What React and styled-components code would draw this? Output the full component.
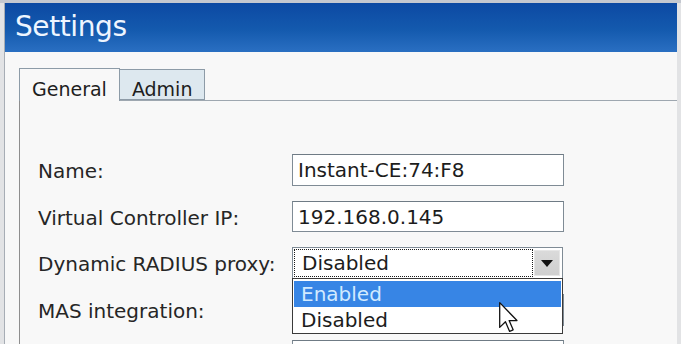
import React from "react";
import styled, { createGlobalStyle } from "styled-components";

const Global = createGlobalStyle`
  html, body { margin: 0; padding: 0; }
  body {
    background: #dedfe2;
    font-family: "DejaVu Sans", Verdana, sans-serif;
    overflow: hidden;
  }
`;

const Desktop = styled.div`
  width: 681px;
  height: 344px;
  box-sizing: border-box;
  padding: 3px 4px 0 4px;
  display: flex;
  overflow: hidden;
  background: linear-gradient(#c4c8d0, #c4c8d0) top / 100% 3px no-repeat, #e2e3e5;
`;

const Window = styled.div`
  flex: 1;
  display: flex;
  flex-direction: column;
  border-left: 1px solid #a7adb5;
  background: #f8f8f8;
  overflow: hidden;
  min-height: 0;
`;

const TitleBar = styled.div`
  flex-shrink: 0;
  height: 49px;
  display: flex;
  align-items: center;
  padding: 0 0 2px 10px;
  box-sizing: border-box;
  background: linear-gradient(#0c49a3 0%, #145aae 55%, #2a6fc2 100%);
  color: #eef5ff;
  font-size: 28px;
  letter-spacing: -0.4px;
`;

const Body = styled.div`
  flex: 1 0 auto;
  padding: 16px 0 0 14px;
  display: flex;
  flex-direction: column;
  background: #f8f8f8;
`;

const TabStrip = styled.div`
  flex-shrink: 0;
  display: flex;
  align-items: flex-end;
  border-bottom: 1px solid #9ea7b0;
  height: 32px;
`;

const Tab = styled.div`
  box-sizing: border-box;
  height: ${(p) => (p.$active ? "33px" : "31px")};
  margin-bottom: ${(p) => (p.$active ? "-1px" : "0")};
  padding: ${(p) => (p.$active ? "9px" : "8px")} 12px 0 12px;
  font-size: 19px;
  color: #1e1e1e;
  border: 1px solid #8d9ba7;
  border-bottom: ${(p) => (p.$active ? "none" : "1px solid #8d9ba7")};
  border-left: ${(p) => (p.$first ? "1px solid #8d9ba7" : "none")};
  background: ${(p) => (p.$active ? "#f8f8f8" : "#dde8ef")};
`;

const Panel = styled.div`
  flex: 1 0 auto;
  border-left: 1px solid #8e8e8e;
  padding: 53px 0 0 18px;
`;

const FormGrid = styled.div`
  display: grid;
  grid-template-columns: 254px 272px;
  grid-auto-rows: 32px;
  row-gap: 14.5px;
  align-items: center;
`;

const Label = styled.div`
  font-size: 20px;
  color: #262626;
  white-space: nowrap;
  padding-top: 2px;
`;

const TextBox = styled.div`
  box-sizing: border-box;
  height: ${(p) => p.$h || 32}px;
  align-self: start;
  border: 1px solid #7f8b95;
  border-top-color: #6f7b85;
  background: #ffffff;
  font-size: 20px;
  color: #1c1c1c;
  padding: 3px 0 0 5px;
  white-space: nowrap;
`;

const SelectWrap = styled.div`
  position: relative;
  height: 32px;
  align-self: start;
`;

const SelectBox = styled.div`
  box-sizing: border-box;
  height: 32px;
  width: 271px;
  border: 1px solid #7f8b95;
  background: #ffffff;
  display: flex;
  align-items: stretch;
  padding: 1px 2px 1px 1px;
  gap: 1px;
`;

const FocusText = styled.div`
  flex: 1;
  border: 1px dotted #1a1a1a;
  font-size: 20px;
  color: #1c1c1c;
  padding: 1px 0 0 7px;
  box-sizing: border-box;
`;

const ArrowButton = styled.div`
  width: 24px;
  margin: 1px 0;
  background: linear-gradient(#dadada, #cfcfcf);
  border: 1px solid #e6e6e6;
  display: flex;
  align-items: center;
  justify-content: center;
`;

const DropList = styled.div`
  position: absolute;
  left: 0;
  top: 31px;
  width: 271px;
  height: 56px;
  box-sizing: border-box;
  border: 1px solid #3a3a3a;
  background: #ffffff;
  padding: 2px 1px 0 1px;
  z-index: 2;
`;

const Option = styled.div`
  height: 26px;
  box-sizing: border-box;
  padding: 0 0 0 7px;
  font-size: 20px;
  line-height: 26px;
  color: ${(p) => (p.$selected ? "#d2eaff" : "#1c1c1c")};
  background: ${(p) => (p.$selected ? "#3785e5" : "transparent")};
`;

const Cursor = styled.svg`
  position: absolute;
  left: 205px;
  top: 22px;
  z-index: 3;
`;

export default function App() {
  return (
    <>
      <Global />
      <Desktop>
        <Window>
          <TitleBar>Settings</TitleBar>
          <Body>
            <TabStrip>
              <Tab $active $first>General</Tab>
              <Tab>Admin</Tab>
            </TabStrip>
            <Panel>
              <FormGrid>
                <Label>Name:</Label>
                <TextBox>Instant-CE:74:F8</TextBox>
                <Label>Virtual Controller IP:</Label>
                <TextBox $h={31}>192.168.0.145</TextBox>
                <Label>Dynamic RADIUS proxy:</Label>
                <SelectWrap>
                  <SelectBox>
                    <FocusText>Disabled</FocusText>
                    <ArrowButton>
                      <svg width="12" height="7" viewBox="0 0 12 7">
                        <path d="M0 0 H12 L6 7 Z" fill="#111" />
                      </svg>
                    </ArrowButton>
                  </SelectBox>
                  <DropList>
                    <Option $selected>Enabled</Option>
                    <Option>Disabled</Option>
                    <Cursor width="21" height="32" viewBox="0 0 13 20">
                      <path
                        d="M1 1 L1 16.5 L4.6 13 L7.2 19 L9.4 18 L6.9 12.2 L11.8 12.2 Z"
                        fill="#ffffff"
                        stroke="#111"
                        strokeWidth="0.8"
                        strokeLinejoin="round"
                      />
                    </Cursor>
                  </DropList>
                </SelectWrap>
                <Label>MAS integration:</Label>
                <TextBox />
                <Label />
                <TextBox />
              </FormGrid>
            </Panel>
          </Body>
        </Window>
      </Desktop>
    </>
  );
}
